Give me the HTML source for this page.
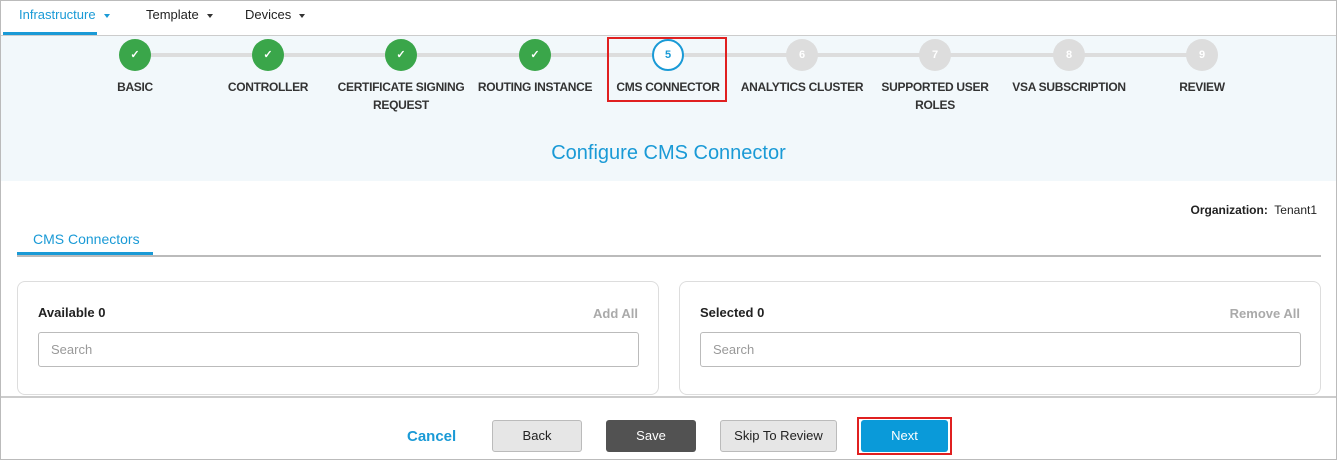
<!DOCTYPE html>
<html><head><style>
*{margin:0;padding:0;box-sizing:border-box}
body{width:1337px;height:460px;position:relative;font-family:"Liberation Sans",sans-serif;background:#fff;overflow:hidden}
.frame{position:absolute;left:0;top:0;width:1337px;height:460px;border:1px solid #bbb;pointer-events:none;z-index:9}
.a{position:absolute}
.nav{font-size:13px;color:#222;top:7px}
.car{display:inline-block;border-left:3px solid transparent;border-right:3px solid transparent;border-top:4px solid #333;vertical-align:middle;margin-left:8px}
.c{position:absolute;width:32px;height:32px;border-radius:50%;top:39px;text-align:center;line-height:32px;font-size:11px;font-weight:bold;color:#fff}
.g{background:#3aa64a}
.gr{background:#ddd}
.lb{position:absolute;top:78px;font-size:12px;font-weight:bold;color:#333;text-align:center;width:140px;line-height:18px;letter-spacing:-0.3px}
.panel{position:absolute;top:281px;height:114px;border:1px solid #ddd;border-radius:8px;background:#fff}
.in{position:absolute;top:50px;left:20px;height:35px;border:1px solid #bbb;border-radius:3px;font-size:13px;color:#999;padding:9px 12px}
.btn{position:absolute;top:420px;height:32px;border-radius:3px;font-size:13px;text-align:center;line-height:30px}
</style></head><body>
<div class="frame"></div>
<div class="a nav" style="left:19px;color:#1a9ad6">Infrastructure<span class="car" style="border-top-color:#1a9ad6"></span></div>
<div class="a nav" style="left:146px">Template<span class="car"></span></div>
<div class="a nav" style="left:245px">Devices<span class="car"></span></div>
<div class="a" style="left:3px;top:32px;width:94px;height:3px;background:#1a9ad6"></div>
<div class="a" style="left:0;top:35px;width:1337px;height:1px;background:#ccc"></div>
<div class="a" style="left:0;top:36px;width:1337px;height:145px;background:#f2f8fb"></div>
<div class="a" style="left:135px;top:53px;width:1067px;height:4px;background:#ddd"></div>
<div class="c g" style="left:119px">✓</div>
<div class="c g" style="left:252px">✓</div>
<div class="c g" style="left:385px">✓</div>
<div class="c g" style="left:519px">✓</div>
<div class="c" style="left:652px;background:#fff;border:2px solid #1a9ad6;color:#1a9ad6;line-height:28px">5</div>
<div class="c gr" style="left:786px">6</div>
<div class="c gr" style="left:919px">7</div>
<div class="c gr" style="left:1053px">8</div>
<div class="c gr" style="left:1186px">9</div>
<div class="lb" style="left:65px">BASIC</div>
<div class="lb" style="left:198px">CONTROLLER</div>
<div class="lb" style="left:331px">CERTIFICATE SIGNING REQUEST</div>
<div class="lb" style="left:465px">ROUTING INSTANCE</div>
<div class="lb" style="left:598px">CMS CONNECTOR</div>
<div class="lb" style="left:732px">ANALYTICS CLUSTER</div>
<div class="lb" style="left:875px;width:120px">SUPPORTED USER ROLES</div>
<div class="lb" style="left:999px">VSA SUBSCRIPTION</div>
<div class="lb" style="left:1132px">REVIEW</div>
<div class="a" style="left:607px;top:37px;width:120px;height:65px;border:2px solid #e02020"></div>
<div class="a" style="left:0;top:142px;width:1337px;text-align:center;font-size:20px;color:#1a9ad6">Configure CMS Connector</div>
<div class="a" style="right:20px;top:203px;font-size:12px;color:#222"><b>Organization:</b>&nbsp; Tenant1</div>
<div class="a" style="left:33px;top:231px;font-size:14px;color:#1a9ad6">CMS Connectors</div>
<div class="a" style="left:17px;top:252px;width:136px;height:3px;background:#1a9ad6"></div>
<div class="a" style="left:17px;top:255px;width:1304px;height:2px;background:#bbb"></div>
<div class="panel" style="left:17px;width:642px">
<div class="a" style="left:20px;top:23px;font-size:13px;color:#222;font-weight:bold">Available 0</div>
<div class="a" style="right:20px;top:24px;font-size:13px;color:#aaa;font-weight:bold">Add All</div>
<div class="in" style="width:601px">Search</div></div>
<div class="panel" style="left:679px;width:642px">
<div class="a" style="left:20px;top:23px;font-size:13px;color:#222;font-weight:bold">Selected 0</div>
<div class="a" style="right:20px;top:24px;font-size:13px;color:#aaa;font-weight:bold">Remove All</div>
<div class="in" style="width:601px">Search</div></div>
<div class="a" style="left:0;top:396px;width:1337px;height:2px;background:#ccc"></div>
<div class="a" style="left:0;top:398px;width:1337px;height:62px;background:#fff"></div>
<div class="a" style="left:407px;top:428px;font-size:15px;color:#1a9ad6;font-weight:bold">Cancel</div>
<div class="btn" style="left:492px;width:90px;background:#e6e6e6;border:1px solid #bbb;color:#222">Back</div>
<div class="btn" style="left:606px;width:90px;background:#525252;color:#fff;line-height:32px">Save</div>
<div class="btn" style="left:720px;width:117px;background:#e6e6e6;border:1px solid #bbb;color:#222">Skip To Review</div>
<div class="a" style="left:857px;top:417px;width:95px;height:38px;border:2px solid #e02020"></div>
<div class="btn" style="left:861px;width:87px;background:#0a9ad9;color:#fff;line-height:32px">Next</div>
</body></html>
